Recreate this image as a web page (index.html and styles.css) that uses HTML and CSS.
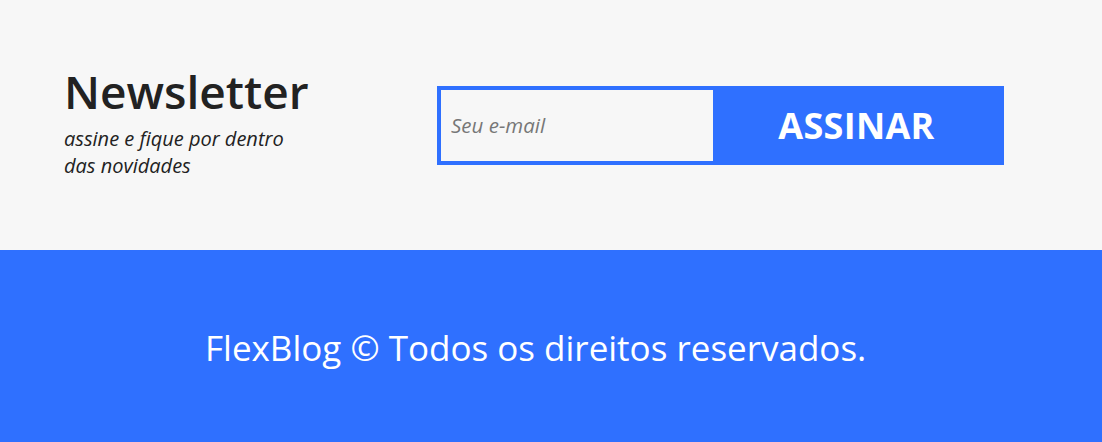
FILE: index.html
```html
<!DOCTYPE html>
<html lang="pt-BR">
<head>
<meta charset="utf-8">
<title>Newsletter</title>
<link rel="stylesheet" href="styles.css">
</head>
<body>
<section class="newsletter">
  <div class="intro">
    <h2 class="title">Newsletter</h2>
    <p class="subtitle">assine e fique por dentro<br>das novidades</p>
  </div>
  <form class="form">
    <input class="email" type="email" placeholder="Seu e-mail">
    <button class="submit" type="button">ASSINAR</button>
  </form>
</section>
<footer class="footer">
  <p class="copy">FlexBlog © Todos os direitos reservados.</p>
</footer>
</body>
</html>
```
FILE: styles.css
```css
* { box-sizing: border-box; }
html, body { margin: 0; padding: 0; }
body {
  font-family: "Open Sans", "Noto Sans", sans-serif;
  background: #f7f7f7;
  color: #222;
}
.newsletter {
  height: 250px;
  display: flex;
  align-items: center;
  padding: 0 0 0 64px;
}
.intro {
  width: 373px;
  padding-bottom: 7px;
}
.title {
  margin: 0;
  font-size: 46px;
  font-weight: 600;
  line-height: 52px;
  color: #222;
}
.subtitle {
  margin: 8px 0 0;
  font-size: 20px;
  font-style: italic;
  line-height: 27px;
}
.form {
  display: flex;
  width: 567px;
  height: 79px;
  border: 4px solid #2f70ff;
  background: #2f70ff;
}
.email {
  width: 272px;
  border: 0;
  background: #f7f7f7;
  font-family: inherit;
  font-size: 20.5px;
  font-style: italic;
  padding: 0 10px;
  outline: none;
}
.email::placeholder { color: #777; }
.submit {
  flex: 1;
  border: 0;
  background: #2f70ff;
  color: #fff;
  font-family: inherit;
  font-size: 36px;
  font-weight: 700;
  letter-spacing: 0.3px;
  cursor: pointer;
}
.footer {
  height: 192px;
  background: #2f70ff;
  display: flex;
  align-items: center;
  padding: 2px 0 0 205px;
}
.copy {
  margin: 0;
  color: #fff;
  font-size: 35px;
}
```
